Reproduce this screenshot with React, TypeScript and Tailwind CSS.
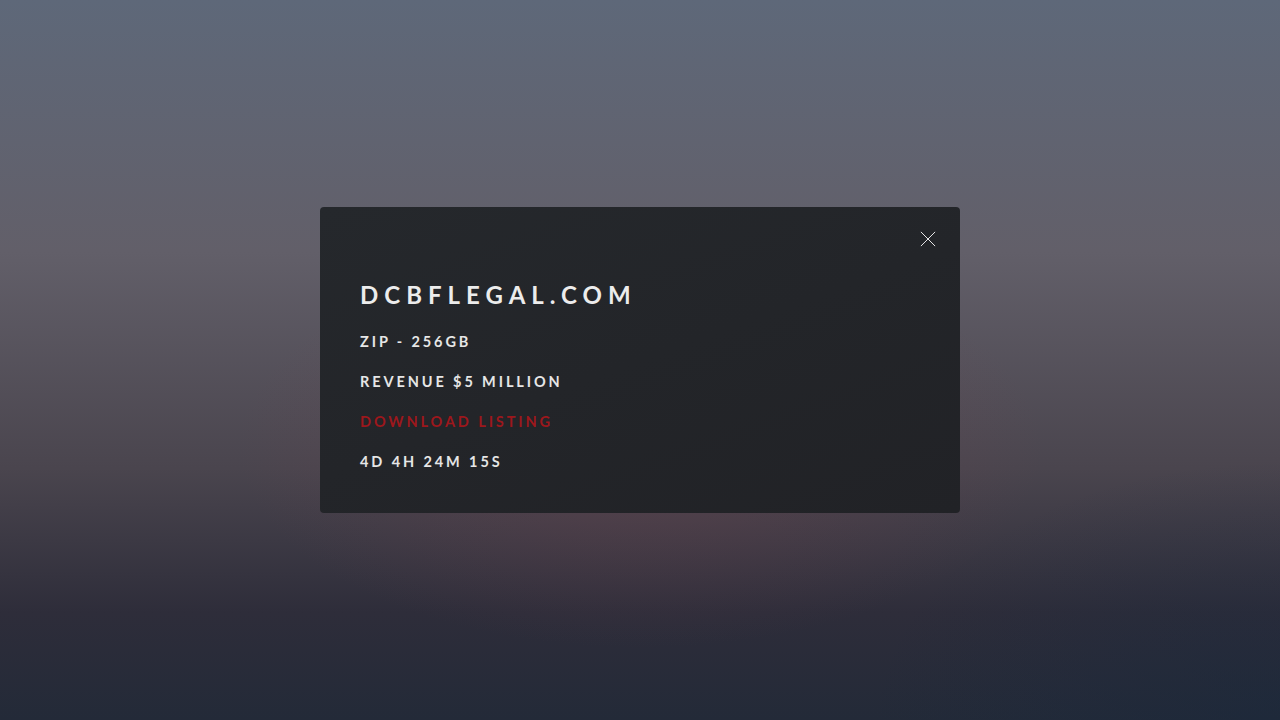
export default function App() {
  const rows = ['ZIP - 256GB', 'REVENUE $5 MILLION'];

  return (
    <div className="relative flex h-[720px] w-full items-center justify-center overflow-hidden bg-[linear-gradient(180deg,#5e6879_0%,#625f69_35%,#4a454e_65%,#2e2d3a_85%,#232a38_100%)] font-['Lato','Noto_Sans',sans-serif]">
      {/* warm glow behind the card, cool corner at the bottom right */}
      <div className="pointer-events-none absolute inset-0 bg-[radial-gradient(ellipse_45%_40%_at_50%_62%,rgba(120,70,80,0.35),rgba(0,0,0,0)_70%)]" />
      <div className="pointer-events-none absolute inset-0 bg-[radial-gradient(ellipse_40%_45%_at_100%_100%,rgba(25,40,60,0.5),rgba(0,0,0,0)_80%)]" />

      <div className="relative h-[306px] w-[640px] rounded-[4px] bg-[linear-gradient(160deg,#25282c,#212226)] px-10 pt-6">
        <button className="absolute right-6 top-6 flex h-4 w-4 items-center justify-center text-white">
          <svg width="18" height="18" viewBox="0 0 18 18" fill="none" stroke="currentColor" strokeWidth="1">
            <path d="M1 1 L17 17 M17 1 L1 17" />
          </svg>
        </button>

        <h1 className="mt-[48px] text-[24px] font-bold leading-[32px] tracking-[0.25em] text-[#ececec]">
          DCBFLEGAL.COM
        </h1>

        <div className="mt-[21px] flex flex-col gap-[20px] text-[14.5px] font-bold leading-[20px] tracking-[0.2em]">
          {rows.map((r) => (
            <p key={r} className="text-[#e6e6e6]">{r}</p>
          ))}
          <a className="text-[#9d171c]">DOWNLOAD LISTING</a>
          <p className="text-[#e6e6e6]">4D 4H 24M 15S</p>
        </div>
      </div>
    </div>
  );
}
